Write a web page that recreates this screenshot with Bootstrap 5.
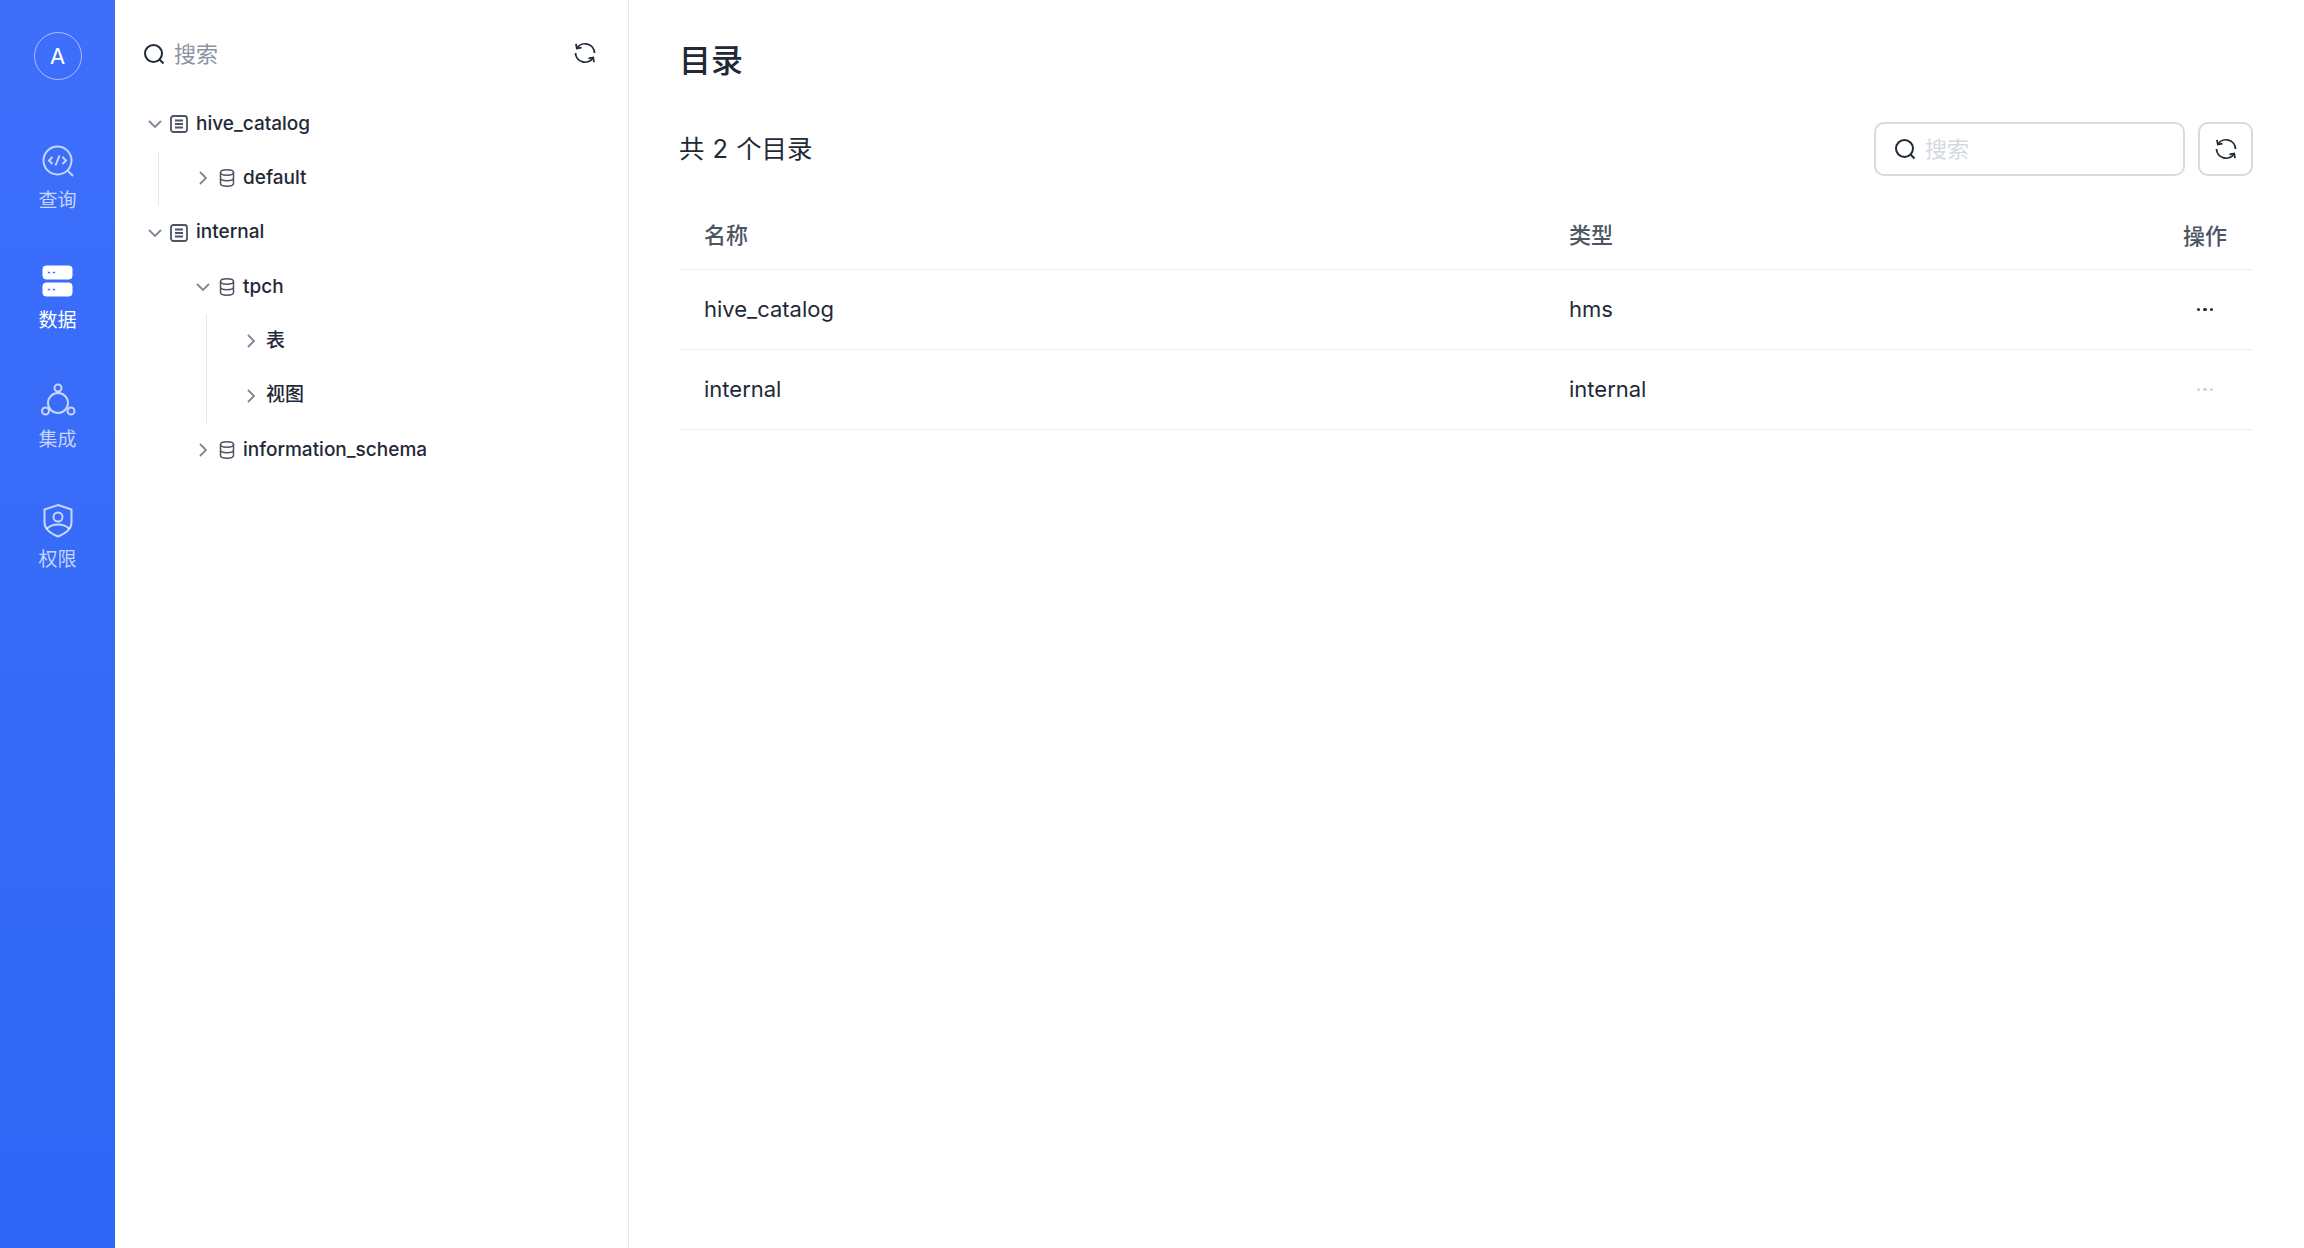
<!DOCTYPE html>
<html lang="zh">
<head>
<meta charset="utf-8">
<title>目录</title>
<link href="https://cdn.jsdelivr.net/npm/bootstrap@5.3.0/dist/css/bootstrap.min.css" rel="stylesheet">
<style>
html,body{height:100%;}
body{font-family:Inter,"Noto Sans CJK SC",sans-serif;color:#1f2937;background:#fff;overflow:hidden;}
svg{display:block;flex:none;fill:none;stroke:currentColor;}
.app-shell{height:1248px;}
.rail{width:115px;background:linear-gradient(180deg,#3d6ffb 0%,#2f66f5 100%);color:#fff;padding-top:32px;}
.avatar-ring{width:48px;height:48px;border:1px solid rgba(255,255,255,.55);border-radius:50%;font-size:22px;line-height:1;margin-bottom:64px;}
.rail-item{width:115px;height:119.6px;color:rgba(255,255,255,.72);font-size:19px;line-height:26px;padding-top:0;gap:8px;}
.rail-item.is-on{color:#fff;}
.rail-item .ico{height:36px;}
.tree-pane{width:514px;border-right:1px solid #e5e7eb;padding:32px 31px 0 28px;}
.tree-search{height:44px;margin-bottom:21px;color:#1f2937;}
.tree-search .ph{font-size:22px;color:#8a93a3;margin-left:9px;}
.tree-search>svg:last-child{margin-top:-2px;}
.tree-row{height:54.3px;font-size:19px;font-weight:500;color:#1f2937;position:relative;white-space:nowrap;}
.chev{width:24px;color:#7d8796;}
.lvl0{padding-left:4px;}
.lvl0 .node-ico{margin-left:-1px;}
.lvl1{padding-left:52px;}
.lvl2{padding-left:100px;}
.lvl2 .chev{width:23px;}
.node-ico{color:#4b5563;margin-right:8px;}
.guide{position:absolute;top:0;bottom:0;width:1px;background:#e5e9f0;}
.tree-group{position:relative;}
.g0{left:15px;}
.g1{left:63px;}
.main-pane{padding:0 51px 0 50px;min-width:0;}
.page-title{font-size:32px;font-weight:500;line-height:44px;margin:39px 0 0;color:#1f2937;}
.toolbar{margin-top:39px;height:54px;}
.count-text{font-size:25.4px;color:#1f2937;word-spacing:1px;}
.search-box{width:311px;height:54px;border:2px solid #d5dae3;border-radius:10px;padding-left:18px;gap:9px;color:#1f2937;}
.search-box .ph{font-size:22px;color:#d3d8e1;}
.refresh-btn{width:55px;height:54px;border:2px solid #d5dae3;border-radius:10px;color:#1f2937;margin-left:13px;padding:0;background:#fff;}
.cat-table{margin:28px 0 0;table-layout:fixed;width:100%;--bs-table-color:#1f2937;}
.cat-table th,.cat-table td{padding:0 25px;border-bottom:1.5px solid #eceef2;vertical-align:middle;font-size:22px;}
.cat-table th{height:65px;font-weight:500;color:#4b5563;font-size:22px;padding-bottom:2px;}
.cat-table td{height:80px;color:#1f2937;}
.col-a{width:865px;}
.col-c{width:96px;text-align:center;}
.cat-table .col-c{padding:0;}
.cat-table td.col-c{padding-bottom:2px;}
.dots{display:inline-flex;gap:3px;vertical-align:middle;}
.dots i{width:3.5px;height:3.5px;border-radius:50%;background:#1f2937;display:block;}
.dots.off i{background:#cfd4dc;}
</style>
</head>
<body>
<div class="app-shell d-flex">
  <nav class="rail d-flex flex-column align-items-center flex-shrink-0">
    <div class="avatar-ring d-flex align-items-center justify-content-center">A</div>
    <div class="rail-item d-flex flex-column align-items-center">
      <div class="ico"><svg width="36" height="36" viewBox="0 0 36 36" stroke-width="2"><circle cx="17.5" cy="16.5" r="14"/><path d="M28 27l5 5"/><path d="M12.5 13l-3.5 3.5 3.5 3.5M22.5 13l3.500 3.500-3.500 3.500M19.500 11.500l-4 10"/></svg></div>
      <div>查询</div>
    </div>
    <div class="rail-item is-on d-flex flex-column align-items-center">
      <div class="ico"><svg width="36" height="36" viewBox="0 0 36 36" stroke="none"><rect x="3" y="2" width="29" height="13" rx="3" fill="#fff"/><rect x="3" y="19" width="29" height="13" rx="3" fill="#fff"/><circle cx="9" cy="8.500" r="1.500" fill="#3d6ffb"/><circle cx="14" cy="8.500" r="1.500" fill="#3d6ffb"/><circle cx="9" cy="25.500" r="1.500" fill="#3d6ffb"/><circle cx="14" cy="25.500" r="1.500" fill="#3d6ffb"/></svg></div>
      <div>数据</div>
    </div>
    <div class="rail-item d-flex flex-column align-items-center">
      <div class="ico"><svg width="36" height="36" viewBox="0 0 36 36" stroke-width="2"><circle cx="18" cy="20" r="10"/><circle cx="18" cy="5" r="3.500" fill="#3a6cf9"/><circle cx="5.500" cy="28" r="3.500" fill="#3a6cf9"/><circle cx="31" cy="28" r="3.500" fill="#3a6cf9"/></svg></div>
      <div>集成</div>
    </div>
    <div class="rail-item d-flex flex-column align-items-center">
      <div class="ico"><svg width="36" height="36" viewBox="0 0 36 36" stroke-width="2"><path d="M18 2l13.500 4.500v13c0 6-6 11-13.500 14C10.500 30.500 4.500 25.500 4.500 19.500v-13z"/><circle cx="18" cy="14" r="4.500"/><path d="M6.500 26c3-3 7-4.500 11.500-4.500s8.500 1.500 11.500 4.500"/></svg></div>
      <div>权限</div>
    </div>
  </nav>

  <aside class="tree-pane flex-shrink-0">
    <div class="tree-search d-flex align-items-center">
      <svg width="22" height="22" viewBox="0 0 22 22" stroke-width="2"><circle cx="10.500" cy="10.500" r="8.500"/><path d="M16.500 16.500l4 4"/></svg>
      <span class="ph flex-grow-1">搜索</span>
      <svg width="24" height="24" viewBox="0 0 24 24" stroke-width="1.800"><path d="M3.800 7.500A9.500 9.500 0 0 1 21.500 12M2.500 12a9.500 9.500 0 0 0 17.700 4.500"/><path d="M3 2.800l.8 4.700 4.700-.8M21 21.200l-.8-4.700-4.700.8"/></svg>
    </div>
    <div class="tree-row lvl0 d-flex align-items-center"><span class="chev"><svg width="16" height="16" viewBox="0 0 16 16" stroke-width="1.800"><path d="M2 5l6 6 6-6"/></svg></span><svg class="node-ico" width="18" height="18" viewBox="0 0 18 18" stroke-width="1.800"><rect x="1" y="1" width="16" height="16" rx="2.500"/><path d="M5 5.500h8M5 9h8M5 12.500h8"/></svg>hive_catalog</div>
    <div class="tree-group">
      <span class="guide g0"></span>
      <div class="tree-row lvl1 d-flex align-items-center"><span class="chev"><svg width="16" height="16" viewBox="0 0 16 16" stroke-width="1.800"><path d="M5 2l6 6-6 6"/></svg></span><svg class="node-ico" width="16" height="18" viewBox="0 0 16 18" stroke-width="1.500"><ellipse cx="8" cy="3.500" rx="6.500" ry="2.700"/><path d="M1.500 3.500v11c0 1.500 3 2.700 6.500 2.700s6.500-1.200 6.500-2.700v-11M1.500 9c0 1.500 3 2.700 6.500 2.700s6.500-1.200 6.500-2.700"/></svg>default</div>
    </div>
    <div class="tree-row lvl0 d-flex align-items-center"><span class="chev"><svg width="16" height="16" viewBox="0 0 16 16" stroke-width="1.800"><path d="M2 5l6 6 6-6"/></svg></span><svg class="node-ico" width="18" height="18" viewBox="0 0 18 18" stroke-width="1.800"><rect x="1" y="1" width="16" height="16" rx="2.500"/><path d="M5 5.500h8M5 9h8M5 12.500h8"/></svg>internal</div>
    <div class="tree-row lvl1 d-flex align-items-center"><span class="chev"><svg width="16" height="16" viewBox="0 0 16 16" stroke-width="1.800"><path d="M2 5l6 6 6-6"/></svg></span><svg class="node-ico" width="16" height="18" viewBox="0 0 16 18" stroke-width="1.500"><ellipse cx="8" cy="3.500" rx="6.500" ry="2.700"/><path d="M1.500 3.500v11c0 1.500 3 2.700 6.500 2.700s6.500-1.200 6.500-2.700v-11M1.500 9c0 1.500 3 2.700 6.500 2.700s6.500-1.200 6.500-2.700"/></svg>tpch</div>
    <div class="tree-group">
      <span class="guide g1"></span>
      <div class="tree-row lvl2 d-flex align-items-center"><span class="chev"><svg width="16" height="16" viewBox="0 0 16 16" stroke-width="1.800"><path d="M5 2l6 6-6 6"/></svg></span>表</div>
      <div class="tree-row lvl2 d-flex align-items-center"><span class="chev"><svg width="16" height="16" viewBox="0 0 16 16" stroke-width="1.800"><path d="M5 2l6 6-6 6"/></svg></span>视图</div>
    </div>
    <div class="tree-row lvl1 d-flex align-items-center"><span class="chev"><svg width="16" height="16" viewBox="0 0 16 16" stroke-width="1.800"><path d="M5 2l6 6-6 6"/></svg></span><svg class="node-ico" width="16" height="18" viewBox="0 0 16 18" stroke-width="1.500"><ellipse cx="8" cy="3.500" rx="6.500" ry="2.700"/><path d="M1.500 3.500v11c0 1.500 3 2.700 6.500 2.700s6.500-1.200 6.500-2.700v-11M1.500 9c0 1.500 3 2.700 6.500 2.700s6.500-1.200 6.500-2.700"/></svg>information_schema</div>
  </aside>

  <main class="main-pane flex-grow-1">
    <h1 class="page-title">目录</h1>
    <div class="toolbar d-flex align-items-center">
      <div class="count-text flex-grow-1">共 2 个目录</div>
      <div class="search-box d-flex align-items-center">
        <svg width="22" height="22" viewBox="0 0 22 22" stroke-width="2"><circle cx="10.500" cy="10.500" r="8.500"/><path d="M16.500 16.500l4 4"/></svg>
        <span class="ph">搜索</span>
      </div>
      <button class="refresh-btn btn d-flex align-items-center justify-content-center" type="button" aria-label="刷新"><svg width="24" height="24" viewBox="0 0 24 24" stroke-width="1.800"><path d="M3.800 7.500A9.500 9.500 0 0 1 21.500 12M2.500 12a9.500 9.500 0 0 0 17.700 4.500"/><path d="M3 2.800l.8 4.700 4.700-.8M21 21.200l-.8-4.700-4.700.8"/></svg></button>
    </div>
    <table class="table cat-table">
      <thead><tr><th class="col-a">名称</th><th>类型</th><th class="col-c">操作</th></tr></thead>
      <tbody>
        <tr><td>hive_catalog</td><td>hms</td><td class="col-c"><span class="dots"><i></i><i></i><i></i></span></td></tr>
        <tr><td>internal</td><td>internal</td><td class="col-c"><span class="dots off"><i></i><i></i><i></i></span></td></tr>
      </tbody>
    </table>
  </main>
</div>
<script src="https://cdn.jsdelivr.net/npm/bootstrap@5.3.0/dist/js/bootstrap.bundle.min.js"></script>
</body>
</html>
